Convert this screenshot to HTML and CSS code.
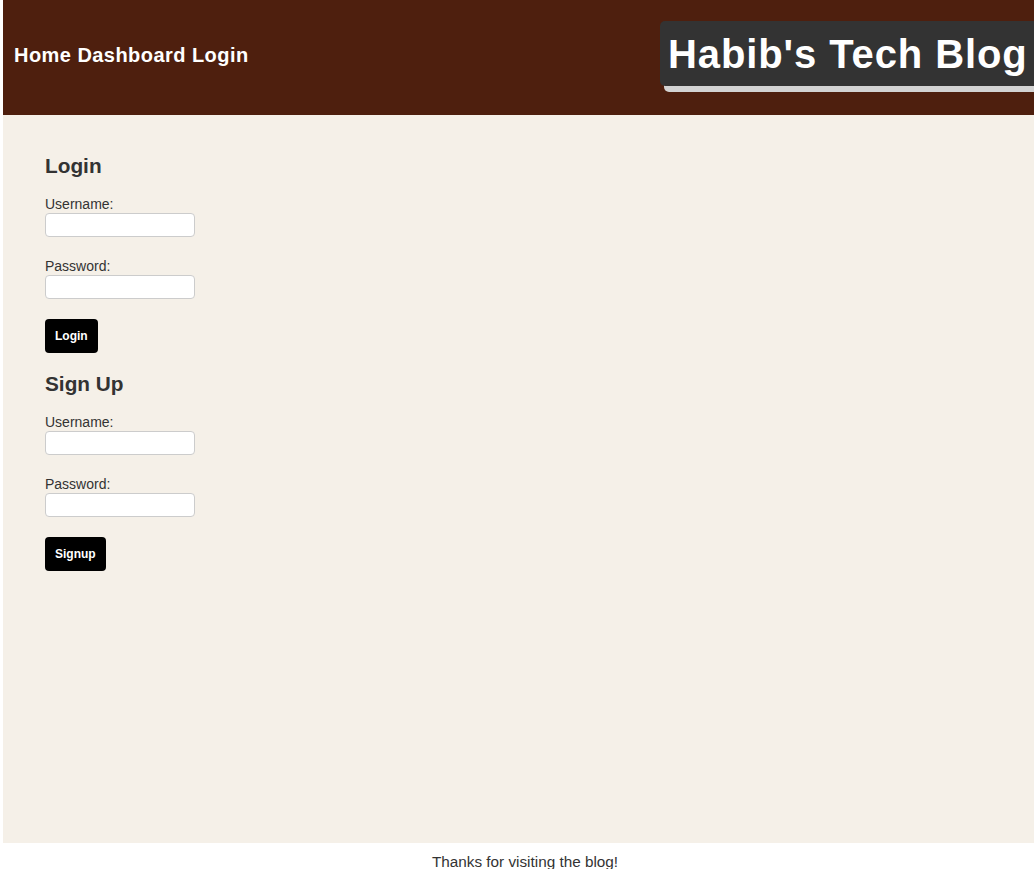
FILE: index.html
```html
<!DOCTYPE html>
<html lang="en">
<head>
<meta charset="utf-8">
<title>Habib's Tech Blog</title>
<link rel="stylesheet" href="styles.css">
</head>
<body>
<div class="page">
  <header class="site-header">
    <nav class="nav">
      <a class="nav-link" href="#">Home</a> <a class="nav-link" href="#">Dashboard</a> <a class="nav-link" href="#">Login</a>
    </nav>
    <h1 class="site-title">Habib's Tech Blog</h1>
  </header>
  <main class="main">
    <section class="auth-section">
      <h2 class="auth-title">Login</h2>
      <form class="auth-form">
        <div class="field">
          <label class="field-label" for="login-user">Username:</label>
          <input class="field-input" id="login-user" type="text">
        </div>
        <div class="field">
          <label class="field-label" for="login-pass">Password:</label>
          <input class="field-input" id="login-pass" type="password">
        </div>
        <button class="btn" type="button">Login</button>
      </form>
    </section>
    <section class="auth-section">
      <h2 class="auth-title">Sign Up</h2>
      <form class="auth-form">
        <div class="field">
          <label class="field-label" for="signup-user">Username:</label>
          <input class="field-input" id="signup-user" type="text">
        </div>
        <div class="field">
          <label class="field-label" for="signup-pass">Password:</label>
          <input class="field-input" id="signup-pass" type="password">
        </div>
        <button class="btn" type="button">Signup</button>
      </form>
    </section>
  </main>
  <footer class="site-footer">Thanks for visiting the blog!</footer>
</div>
</body>
</html>
```

FILE: styles.css
```css
html, body {
  margin: 0;
  padding: 0;
  background: #ffffff;
  overflow: hidden;
}

body {
  font-family: "Liberation Sans", Arial, sans-serif;
  color: #333333;
}

.page {
  margin-left: 3px;
  width: 1044px;
}

.site-header {
  height: 115px;
  background: #4e1f0e;
  display: flex;
  align-items: flex-start;
  overflow: hidden;
}

.nav {
  flex: 0 0 646px;
  padding-left: 11px;
  margin-top: 44px;
  font-size: 20px;
  line-height: 23px;
  font-weight: bold;
  letter-spacing: 0.45px;
  white-space: nowrap;
}

.nav-link {
  color: #ffffff;
  text-decoration: none;
}

.site-title {
  flex: 0 0 auto;
  margin: 21px 0 0 0;
  padding: 10px 20px 9px 8px;
  background: #333333;
  color: #ffffff;
  font-size: 40px;
  line-height: 46px;
  font-weight: bold;
  letter-spacing: 0.9px;
  border-radius: 5px;
  box-shadow: 4px 6px 0 #d3d3d3;
  white-space: nowrap;
}

.main {
  box-sizing: border-box;
  height: 728px;
  background: #f5f0e8;
  padding: 39px 0 0 42px;
}

.auth-section + .auth-section {
  margin-top: 19px;
}

.auth-title {
  margin: 0 0 19px 0;
  font-size: 20.8px;
  line-height: 24px;
  font-weight: bold;
  color: #333333;
}

.auth-form {
  margin: 0;
}

.field + .field {
  margin-top: 22px;
}

.field-label {
  display: block;
  font-size: 14px;
  line-height: 14px;
  padding-bottom: 2px;
  color: #333333;
}

.field-input {
  display: block;
  box-sizing: border-box;
  width: 150px;
  height: 24px;
  margin: 0;
  padding: 0 4px;
  border: 1px solid #cccccc;
  border-radius: 4px;
  background: #ffffff;
  font-family: "Liberation Sans", Arial, sans-serif;
  font-size: 13px;
}

.btn {
  display: block;
  margin-top: 20px;
  padding: 10px;
  border: none;
  border-radius: 4px;
  background: #000000;
  color: #ffffff;
  font-family: "Liberation Sans", Arial, sans-serif;
  font-size: 12px;
  line-height: 14px;
  font-weight: bold;
  cursor: pointer;
}

.site-footer {
  padding-top: 10px;
  text-align: center;
  font-size: 15.3px;
  line-height: 17px;
  color: #333333;
  background: #ffffff;
}
```
